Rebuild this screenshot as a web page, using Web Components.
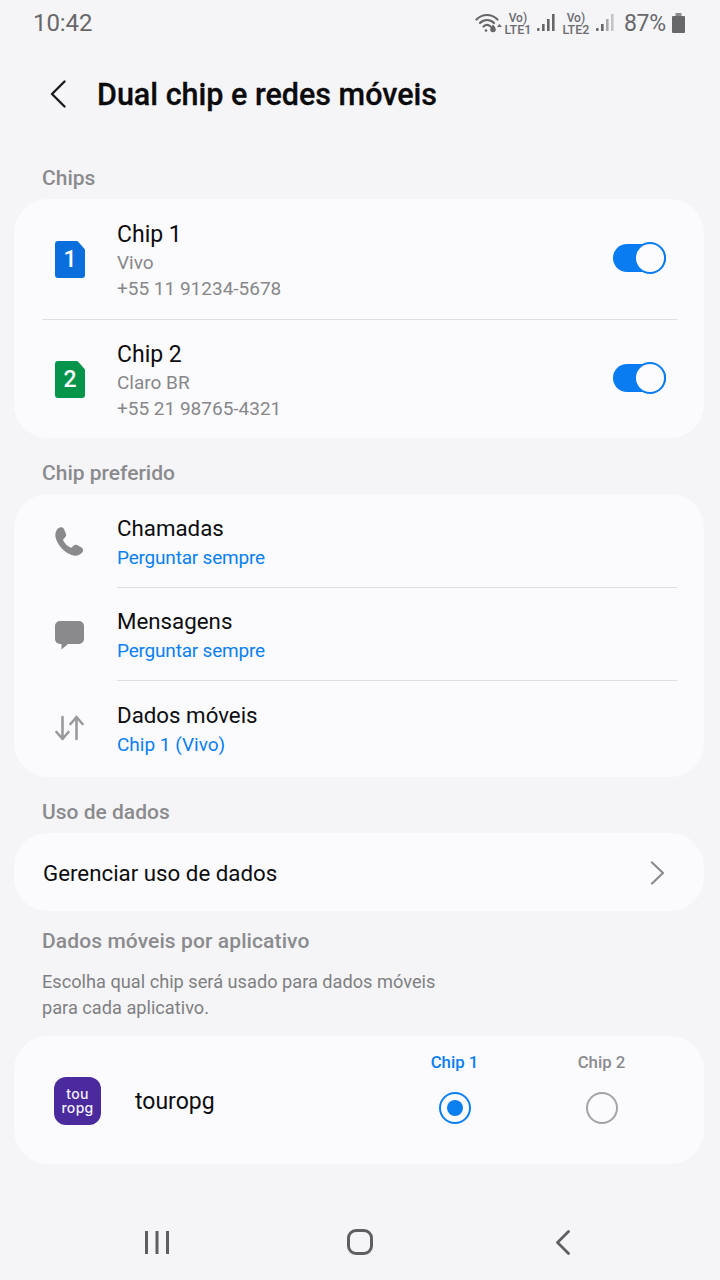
<!DOCTYPE html>
<html lang="pt-BR">
<head>
<meta charset="utf-8">
<title>Dual chip e redes móveis</title>
<style>
html, body { margin: 0; padding: 0; }
body {
  width: 720px; height: 1280px; overflow: hidden;
  background: #f5f5f8;
  font-family: Roboto, "Liberation Sans", sans-serif;
}
settings-page { display: block; }
</style>
</head>
<body>
<settings-page>
  <status-bar></status-bar>
  <app-header>Dual chip e redes móveis</app-header>

  <section-label style="--top:22px">Chips</section-label>
  <group-card style="--top:9px">
    <sim-row name="Chip 1" carrier="Vivo" phone="+55 11 91234-5678" num="1" color="#0a6fdc"></sim-row>
    <sim-row name="Chip 2" carrier="Claro BR" phone="+55 21 98765-4321" num="2" color="#05944a" divider></sim-row>
  </group-card>

  <section-label style="--top:23px">Chip preferido</section-label>
  <group-card style="--top:9px">
    <pref-row name="Chamadas" value="Perguntar sempre" icon="phone"></pref-row>
    <pref-row name="Mensagens" value="Perguntar sempre" icon="message" divider></pref-row>
    <pref-row name="Dados móveis" value="Chip 1 (Vivo)" icon="data" divider></pref-row>
  </group-card>

  <section-label style="--top:23px">Uso de dados</section-label>
  <group-card style="--top:9px">
    <link-row>Gerenciar uso de dados</link-row>
  </group-card>

  <section-label style="--top:18px;letter-spacing:.1px">Dados móveis por aplicativo</section-label>
  <help-text>Escolha qual chip será usado para dados móveis<br>para cada aplicativo.</help-text>
  <group-card style="--top:15px">
    <app-row name="touropg"></app-row>
  </group-card>
</settings-page>
<nav-bar></nav-bar>

<script>
function shadow(el, html) {
  el.attachShadow({ mode: "open" }).innerHTML = html;
}

class StatusBar extends HTMLElement {
  connectedCallback() {
    shadow(this, `
<style>
:host { display: flex; align-items: center; height: 46px; padding: 0 34px 0 33px; color: #68686b; }
.time { font-size: 24px; letter-spacing: -.1px; flex: 1; }
.icons { display: flex; align-items: center; }
.vo { display: flex; flex-direction: column; align-items: center; font-size: 12.500px; line-height: 11px; font-weight: 500; width: 26px; color: #6c6c6f; padding-top: 2px; }
.vo span:first-child { font-size: 12px; }
.pct { font-size: 23px; margin: 0 5px 0 8px; letter-spacing: -.2px; }
svg { display: block; }
</style>
<span class="time">10:42</span>
<div class="icons">
  <svg width="27" height="22" viewBox="0 0 27 22" fill="none" stroke="#66666a" stroke-linecap="round">
    <path d="M1.500 7.500C7.500 1.500 16.500 1.500 22.500 7.500" stroke-width="2.200"/>
    <path d="M5 11C9 7 15 7 19 11" stroke-width="2.200"/>
    <path d="M8.500 14.500C10.800 12.400 13.200 12.400 15.500 14.500" stroke-width="2.200"/>
    <circle cx="11" cy="18.500" r="1.300" fill="#66666a" stroke="none"/>
    <path d="M18 13.500c1.800 2.400 2.800 3.600 2.800 5a2.800 2.800 0 0 1-5.600 0c0-1.400 1-2.600 2.800-5z" fill="#66666a" stroke="none" transform="translate(0 -1)"/>
    <path d="M24.500 12l2.500 3h-5z" fill="#66666a" stroke="none"/>
  </svg>
  <div class="vo" style="margin-left:3px"><span>Vo)</span><span>LTE1</span></div>
  <svg style="margin-left:5px" width="21" height="20" viewBox="0 0 21 20" fill="#66666a">
    <rect x="1" y="15" width="2.600" height="3" rx="1"/><rect x="6" y="11" width="2.600" height="7"/><rect x="11" y="6" width="2.600" height="12"/><rect x="16" y="1" width="2.600" height="17"/>
  </svg>
  <div class="vo" style="margin-left:6px"><span>Vo)</span><span>LTE2</span></div>
  <svg style="margin-left:6px" width="21" height="20" viewBox="0 0 21 20" fill="#66666a">
    <rect x="1" y="15" width="2.600" height="3" rx="1"/><rect x="6" y="11" width="2.600" height="7"/><rect x="11" y="6" width="2.600" height="12" fill="#aaaaad"/><rect x="16" y="1" width="2.600" height="17" fill="#c4c4c7"/>
  </svg>
  <span class="pct">87%</span>
  <svg width="15" height="22" viewBox="0 0 15 22" fill="#68686b">
    <rect x="4.500" y="1" width="6" height="3" fill="#8c8c8f"/><rect x="1" y="4" width="13" height="17" rx="1"/>
  </svg>
</div>`);
  }
}

class AppHeader extends HTMLElement {
  connectedCallback() {
    shadow(this, `
<style>
:host { display: flex; align-items: center; height: 98px; padding: 0 0 2px 50px; box-sizing: border-box; }
svg { display: block; margin-right: 31px; }
h1 { margin: 0; font-size: 30.500px; font-weight: 500; color: #0b0b0d; -webkit-text-stroke: .3px #0b0b0d; }
</style>
<svg width="16" height="28" viewBox="0 0 16 28" fill="none" stroke="#1b1b1d" stroke-width="2.400" stroke-linecap="round" stroke-linejoin="round"><path d="M14.500 1.500L2 14l12.500 12.500"/></svg>
<h1><slot></slot></h1>`);
  }
}

class SectionLabel extends HTMLElement {
  connectedCallback() {
    shadow(this, `
<style>
:host { display: block; margin-top: var(--top, 20px); padding-left: 42px; font-size: 21px; line-height: 24px; font-weight: 500; color: #8b8b8e; }
</style>
<slot></slot>`);
  }
}

class HelpText extends HTMLElement {
  connectedCallback() {
    shadow(this, `
<style>
:host { display: block; margin-top: 16px; padding-left: 42px; font-size: 18.200px; line-height: 26px; color: #7f7f82; }
</style>
<slot></slot>`);
  }
}

class GroupCard extends HTMLElement {
  connectedCallback() {
    shadow(this, `
<style>
:host { display: block; margin: var(--top, 9px) 16px 0 14px; background: #fbfbfe; border-radius: 34px; overflow: hidden; }
</style>
<slot></slot>`);
  }
}

class SimRow extends HTMLElement {
  connectedCallback() {
    const divider = this.hasAttribute("divider");
    const color = this.getAttribute("color");
    shadow(this, `
<style>
:host { display: block; padding: 0 27px 0 28px; }
.row { display: flex; align-items: center; height: ${divider ? 119 : 120}px; box-sizing: border-box; border-top: ${divider ? "1px solid #dfdfe2" : "0"}; }
.sim { width: 30px; height: 37px; margin: 0 32px 0 13px; position: relative; flex: none; display: flex; align-items: center; justify-content: center; color: #fff; font-size: 23px; font-weight: 500; }
.sim svg { position: absolute; inset: 0; }
.sim span { position: relative; }
.text { flex: 1; padding-top: 2px; }
.title { font-size: 23px; line-height: 31px; color: #0d0d0f; }
.sub { font-size: 19px; line-height: 26px; color: #87878a; }
toggle-switch { margin-top: -2px; }
</style>
<div class="row">
  <div class="sim">
    <svg width="30" height="37" viewBox="0 0 30 37"><path d="M3 0H21.500Q22.500 0 23.200 .8L29.200 7.500Q30 8.300 30 9.500V34a3 3 0 0 1-3 3H3a3 3 0 0 1-3-3V3a3 3 0 0 1 3-3z" fill="${color}"/></svg>
    <span>${this.getAttribute("num")}</span>
  </div>
  <div class="text">
    <div class="title">${this.getAttribute("name")}</div>
    <div class="sub">${this.getAttribute("carrier")}</div>
    <div class="sub">${this.getAttribute("phone")}</div>
  </div>
  <toggle-switch></toggle-switch>
</div>`);
  }
}

class ToggleSwitch extends HTMLElement {
  connectedCallback() {
    shadow(this, `
<style>
:host { display: block; width: 53px; height: 32px; margin-right: 11px; position: relative; }
.track { position: absolute; left: 0; top: 2px; width: 53px; height: 28px; border-radius: 14px; background: #0a7cf2; }
.knob { position: absolute; right: 0; top: 0; width: 32px; height: 32px; box-sizing: border-box; border-radius: 50%; background: #fcfcff; border: 2px solid #0a7cf2; }
</style>
<div class="track"></div><div class="knob"></div>`);
  }
}

const PREF_ICONS = {
  phone: `<path d="M3 1.500C5 -.5 8 0 9 2L11 7C11.500 8.500 11 9.500 10 10.500L8.500 12C8 12.500 8 13 8.300 13.600C10 17 12 19 15.500 20.500C16 20.800 16.600 20.700 17 20.200L18.500 18.700C19.500 17.700 21 17.500 22 18L26.500 20.500C28.300 21.500 28.500 24 27.200 25.500C25 28 22 29.300 18.500 28.500C10 26.500 2.500 18.500 .5 10C-.2 6.800 1 3.500 3 1.500Z" fill="#8a8a8d"/>`,
  message: `<path d="M5 0H24a5 5 0 0 1 5 5V18a5 5 0 0 1-5 5H13L6.500 28.500V23H5a5 5 0 0 1-5-5V5a5 5 0 0 1 5-5z" fill="#8a8a8d"/>`,
  data: `<g fill="none" stroke="#9a9a9d" stroke-width="2.600" stroke-linecap="round" stroke-linejoin="round"><path d="M7.500 2V24M1.500 17L7.500 24L13.500 17"/><path d="M21.500 24V2M15.500 9L21.500 2L27.500 9"/></g>`
};

class PrefRow extends HTMLElement {
  connectedCallback() {
    const icon = this.getAttribute("icon");
    const last = icon === "data";
    const size = { phone: [29, 29], message: [29, 29], data: [29, 26] }[icon];
    const shift = { phone: 2, message: 3, data: -2 }[icon];
    shadow(this, `
<style>
:host { display: flex; align-items: stretch; height: ${last ? 97 : 93}px; }
.ico { width: 103px; flex: none; display: flex; align-items: center; padding-left: 41px; box-sizing: border-box; }
svg { display: block; margin-top: ${shift}px; }
.text { flex: 1; margin-right: 27px; display: flex; flex-direction: column; justify-content: center; box-sizing: border-box; padding-top: ${last ? 3 : 6}px; border-top: ${this.hasAttribute("divider") ? "1px solid #dfdfe2" : "0"}; }
.title { font-size: 22.300px; line-height: 28px; color: #0d0d0f; }
.val { font-size: 19px; line-height: 32px; color: #0a7ff0; letter-spacing: ${last ? 0 : -0.2}px; }
</style>
<div class="ico"><svg width="${size[0]}" height="${size[1]}" viewBox="0 0 ${size[0]} ${size[1]}">${PREF_ICONS[icon]}</svg></div>
<div class="text">
  <div class="title">${this.getAttribute("name")}</div>
  <div class="val">${this.getAttribute("value")}</div>
</div>`);
  }
}

class LinkRow extends HTMLElement {
  connectedCallback() {
    shadow(this, `
<style>
:host { display: flex; align-items: center; height: 78px; box-sizing: border-box; padding: 2px 39px 0 29px; font-size: 22.300px; color: #0d0d0f; }
span { flex: 1; }
svg { display: block; }
</style>
<span><slot></slot></span>
<svg width="15" height="24" viewBox="0 0 15 24" fill="none" stroke="#8b8b8e" stroke-width="2.200" stroke-linecap="round" stroke-linejoin="round"><path d="M2 1.500L13 12L2 22.500"/></svg>`);
  }
}

class AppRow extends HTMLElement {
  connectedCallback() {
    shadow(this, `
<style>
:host { display: flex; align-items: center; height: 128px; padding-left: 40px; }
.logo { width: 47px; height: 48px; border-radius: 12px; background: #4a2a9c; color: #f4f0ff; flex: none; display: flex; flex-direction: column; align-items: center; justify-content: center; font-family: Inter, Roboto, sans-serif; font-size: 14px; line-height: 14px; font-weight: 500; letter-spacing: .3px; margin-top: 1px; }
.name { font-size: 23px; color: #0d0d0f; margin-left: 34px; flex: 1; margin-top: 3px; }
.opt { width: 147px; display: flex; flex-direction: column; align-items: center; gap: 20px; font-size: 16.800px; line-height: 20px; font-weight: 500; color: #8b8b8e; margin-top: -24px; }
.opt.on { color: #0a7ff0; }
.radio { width: 32px; height: 32px; box-sizing: border-box; border-radius: 50%; border: 2px solid #a3a3a6; display: flex; align-items: center; justify-content: center; }
.on .radio { border-color: #0a7ff0; }
.on .radio::after { content: ""; width: 16px; height: 16px; border-radius: 50%; background: #0a7ff0; }
.opts { display: flex; margin-right: 29px; }
</style>
<div class="logo"><span>tou</span><span>ropg</span></div>
<div class="name">${this.getAttribute("name")}</div>
<div class="opts">
  <div class="opt on"><span>Chip 1</span><div class="radio"></div></div>
  <div class="opt"><span>Chip 2</span><div class="radio"></div></div>
</div>`);
  }
}

class NavBar extends HTMLElement {
  connectedCallback() {
    shadow(this, `
<style>
:host { display: flex; align-items: center; margin-top: 51px; height: 54px; padding-left: 145px; }
svg { display: block; }
</style>
<svg width="25" height="25" viewBox="0 0 25 25" fill="#5f5f62"><rect x="0" y="1" width="3" height="23"/><rect x="10.500" y="1" width="3" height="23"/><rect x="21" y="1" width="3" height="23"/></svg>
<svg style="margin-left:177px" width="26" height="26" viewBox="0 0 26 26" fill="none" stroke="#5f5f62" stroke-width="3"><rect x="1.500" y="1.500" width="23" height="23" rx="7.500"/></svg>
<svg style="margin-left:183px" width="14" height="25" viewBox="0 0 14 25" fill="none" stroke="#5f5f62" stroke-width="2.800" stroke-linecap="round" stroke-linejoin="round"><path d="M12.500 1.500L1.500 12.500L12.500 23.500"/></svg>`);
  }
}

customElements.define("status-bar", StatusBar);
customElements.define("app-header", AppHeader);
customElements.define("section-label", SectionLabel);
customElements.define("help-text", HelpText);
customElements.define("group-card", GroupCard);
customElements.define("sim-row", SimRow);
customElements.define("toggle-switch", ToggleSwitch);
customElements.define("pref-row", PrefRow);
customElements.define("link-row", LinkRow);
customElements.define("app-row", AppRow);
customElements.define("nav-bar", NavBar);
</script>
</body>
</html>
